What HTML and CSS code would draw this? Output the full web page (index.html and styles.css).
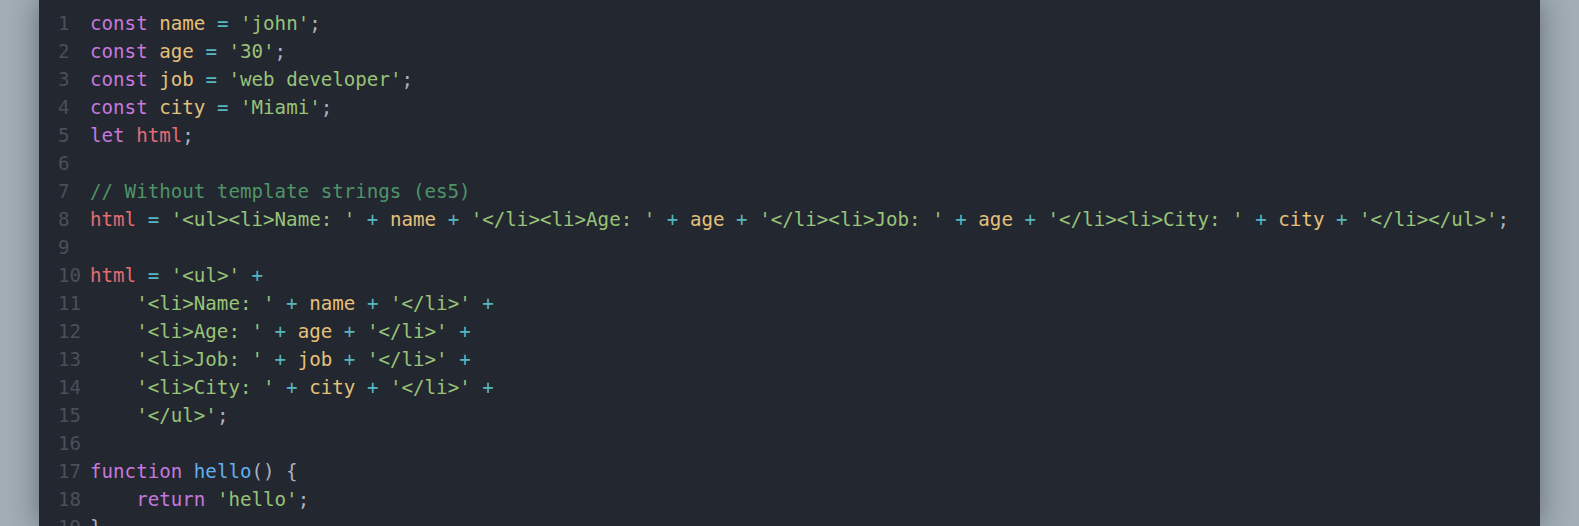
FILE: index.html
```html
<!DOCTYPE html>
<html>
<head>
<meta charset="utf-8">
<link rel="stylesheet" href="styles.css">
</head>
<body>
<div class="stage">
  <div class="editor">
    <div class="line"><span class="ln">1</span><span class="code"><span class="kw">const</span> <span class="var">name</span> <span class="op">=</span> <span class="str">'john'</span><span class="pun">;</span></span></div>
    <div class="line"><span class="ln">2</span><span class="code"><span class="kw">const</span> <span class="var">age</span> <span class="op">=</span> <span class="str">'30'</span><span class="pun">;</span></span></div>
    <div class="line"><span class="ln">3</span><span class="code"><span class="kw">const</span> <span class="var">job</span> <span class="op">=</span> <span class="str">'web developer'</span><span class="pun">;</span></span></div>
    <div class="line"><span class="ln">4</span><span class="code"><span class="kw">const</span> <span class="var">city</span> <span class="op">=</span> <span class="str">'Miami'</span><span class="pun">;</span></span></div>
    <div class="line"><span class="ln">5</span><span class="code"><span class="kw">let</span> <span class="red">html</span><span class="pun">;</span></span></div>
    <div class="line"><span class="ln">6</span><span class="code"></span></div>
    <div class="line"><span class="ln">7</span><span class="code"><span class="com">// Without template strings (es5)</span></span></div>
    <div class="line"><span class="ln">8</span><span class="code"><span class="red">html</span> <span class="op">=</span> <span class="str">'&lt;ul&gt;&lt;li&gt;Name: '</span> <span class="op">+</span> <span class="var">name</span> <span class="op">+</span> <span class="str">'&lt;/li&gt;&lt;li&gt;Age: '</span> <span class="op">+</span> <span class="var">age</span> <span class="op">+</span> <span class="str">'&lt;/li&gt;&lt;li&gt;Job: '</span> <span class="op">+</span> <span class="var">age</span> <span class="op">+</span> <span class="str">'&lt;/li&gt;&lt;li&gt;City: '</span> <span class="op">+</span> <span class="var">city</span> <span class="op">+</span> <span class="str">'&lt;/li&gt;&lt;/ul&gt;'</span><span class="pun">;</span></span></div>
    <div class="line"><span class="ln">9</span><span class="code"></span></div>
    <div class="line"><span class="ln">10</span><span class="code"><span class="red">html</span> <span class="op">=</span> <span class="str">'&lt;ul&gt;'</span> <span class="op">+</span></span></div>
    <div class="line"><span class="ln">11</span><span class="code">    <span class="str">'&lt;li&gt;Name: '</span> <span class="op">+</span> <span class="var">name</span> <span class="op">+</span> <span class="str">'&lt;/li&gt;'</span> <span class="op">+</span></span></div>
    <div class="line"><span class="ln">12</span><span class="code">    <span class="str">'&lt;li&gt;Age: '</span> <span class="op">+</span> <span class="var">age</span> <span class="op">+</span> <span class="str">'&lt;/li&gt;'</span> <span class="op">+</span></span></div>
    <div class="line"><span class="ln">13</span><span class="code">    <span class="str">'&lt;li&gt;Job: '</span> <span class="op">+</span> <span class="var">job</span> <span class="op">+</span> <span class="str">'&lt;/li&gt;'</span> <span class="op">+</span></span></div>
    <div class="line"><span class="ln">14</span><span class="code">    <span class="str">'&lt;li&gt;City: '</span> <span class="op">+</span> <span class="var">city</span> <span class="op">+</span> <span class="str">'&lt;/li&gt;'</span> <span class="op">+</span></span></div>
    <div class="line"><span class="ln">15</span><span class="code">    <span class="str">'&lt;/ul&gt;'</span><span class="pun">;</span></span></div>
    <div class="line"><span class="ln">16</span><span class="code"></span></div>
    <div class="line"><span class="ln">17</span><span class="code"><span class="kw">function</span> <span class="fn">hello</span><span class="pun">()</span> <span class="pun">{</span></span></div>
    <div class="line"><span class="ln">18</span><span class="code">    <span class="kw">return</span> <span class="str">'hello'</span><span class="pun">;</span></span></div>
    <div class="line"><span class="ln">19</span><span class="code"><span class="pun">}</span></span></div>
  </div>
</div>
</body>
</html>
```
FILE: styles.css
```css
html, body {
  margin: 0;
  padding: 0;
  height: 100%;
  overflow: hidden;
}
body {
  background: #a2adb6;
}
.stage {
  height: 100%;
  padding-left: 39px;
  box-sizing: border-box;
}
.editor {
  width: 1501px;
  height: 100%;
  background: #23272f;
  box-shadow: 0 0 28px rgba(20, 26, 34, 0.45);
  box-sizing: border-box;
  padding: 10px 0 0 19px;
  font-family: "DejaVu Sans Mono", "Liberation Mono", monospace;
  font-size: 19.17px;
  line-height: 28px;
  color: #abb2bf;
  overflow: hidden;
}
.line {
  display: flex;
  height: 28px;
  white-space: pre;
}
.ln {
  width: 32px;
  flex: none;
  color: #495059;
}
.code {
  white-space: pre;
}
.kw { color: #c678dd; }
.var { color: #e5c07b; }
.op { color: #56b6c2; }
.str { color: #98c379; }
.pun { color: #abb2bf; }
.red { color: #e06c75; }
.com { color: #4e9468; }
.fn { color: #61afef; }
```
